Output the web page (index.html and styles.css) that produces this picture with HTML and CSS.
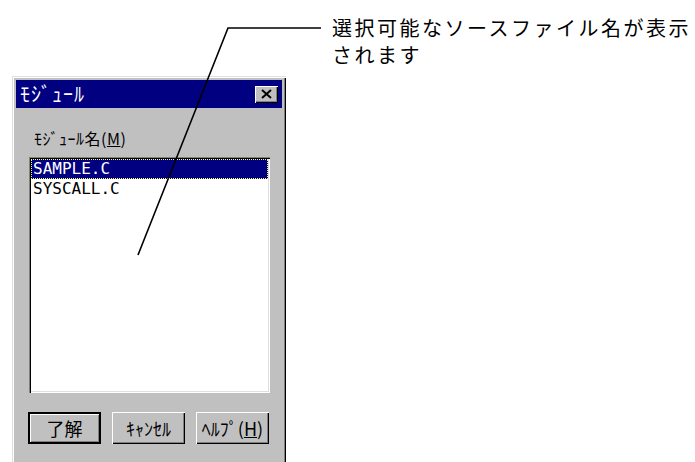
FILE: index.html
```html
<!DOCTYPE html>
<html lang="ja">
<head>
    <meta charset="UTF-8">
    <meta name="viewport" content="width=device-width, initial-scale=1.0">
    <title>モジュール</title>
    <link rel="stylesheet" href="styles.css">
</head>
<body>

    <div class="page">
        <div class="dialog">
            <div class="titlebar">
                <span class="title">ﾓｼﾞｭｰﾙ</span>
                <span class="close">
                    <svg width="11" height="10" viewBox="0 0 11 10">
                        <path d="M1 1 L10 9 M10 1 L1 9" stroke="#000" stroke-width="2"/>
                    </svg>
                </span>
            </div>
            <div class="content">
                <div class="label">ﾓｼﾞｭｰﾙ名(<u>M</u>)</div>
                <div class="listbox">
                    <div class="item selected">SAMPLE.C</div>
                    <div class="item">SYSCALL.C</div>
                </div>
                <div class="buttons">
                    <button class="btn default">了解</button>
                    <button class="btn">ｷｬﾝｾﾙ</button>
                    <button class="btn">ﾍﾙﾌﾟ(<u>H</u>)</button>
                </div>
            </div>
        </div>

        <p class="note">選択可能なソースファイル名が表示<br>されます</p>

        <svg class="leader" width="695" height="462" viewBox="0 0 695 462">
            <polyline points="138,255 228,28 321,28" fill="none" stroke="#000" stroke-width="1.6"/>
        </svg>
    </div>

</body>
</html>
```

FILE: styles.css
```css
body {
    margin: 0;
    background: #fff;
    font-family: "Noto Sans CJK JP", "Noto Sans", sans-serif;
    overflow: hidden;
}
.page {
    position: relative;
    display: flex;
    align-items: flex-start;
    width: 695px;
    height: 462px;
    overflow: hidden;
}
.dialog {
    flex: none;
    width: 266px;
    height: 400px;
    margin: 76px 0 0 12px;
    padding: 4px;
    background: #c0c0c0;
    box-shadow: inset 1px 1px 0 #dfdfdf, inset 2px 2px 0 #fff, inset -1px -1px 0 #000, inset -2px -2px 0 #808080;
}
.titlebar {
    display: flex;
    align-items: center;
    justify-content: space-between;
    height: 28px;
    background: #000080;
    padding: 0 4px 0 4px;
}
.title {
    color: #fff;
    font-size: 20px;
    line-height: 28px;
    letter-spacing: 1px;
}
.close {
    display: flex;
    align-items: center;
    justify-content: center;
    width: 23px;
    height: 17px;
    background: #c0c0c0;
    box-shadow: inset 1px 1px 0 #fff, inset -1px -1px 0 #000, inset -2px -2px 0 #808080;
}
.content {
    padding: 0 12px 0 12px;
}
.label {
    margin: 20px 0 0 6px;
    font-size: 16px;
    line-height: 20px;
    color: #000;
    letter-spacing: 0.5px;
}
.listbox {
    margin: 9px 0 0 1px;
    width: 237px;
    height: 232px;
    padding: 2px;
    background: #fff;
    box-shadow: inset 1px 1px 0 #808080, inset 2px 2px 0 #000, inset -1px -1px 0 #fff, inset -2px -2px 0 #dfdfdf;
}
.item {
    font-family: "DejaVu Sans Mono", monospace;
    font-size: 16px;
    line-height: 20px;
    height: 20px;
    padding-left: 2px;
    color: #000;
    box-sizing: border-box;
}
.item.selected {
    background: #000080;
    color: #fff;
    outline: 1px dotted #ffff60;
    outline-offset: -1px;
}
.buttons {
    display: flex;
    justify-content: space-between;
    width: 241px;
    margin-top: 19px;
}
.btn {
    width: 73px;
    height: 32px;
    padding: 0;
    border: none;
    background: #c0c0c0;
    font-family: "Noto Sans CJK JP", sans-serif;
    font-size: 18px;
    color: #000;
    box-shadow: inset 1px 1px 0 #fff, inset -1px -1px 0 #000, inset -2px -2px 0 #808080;
}
.btn.default {
    box-shadow: inset 0 0 0 2px #000, inset 3px 3px 0 #fff, inset -3px -3px 0 #808080;
}
.note {
    margin: 14px 0 0 46px;
    font-size: 20px;
    line-height: 27px;
    letter-spacing: 2.5px;
    color: #000;
    white-space: nowrap;
}
.leader {
    position: absolute;
    left: 0;
    top: 0;
    pointer-events: none;
}
```
